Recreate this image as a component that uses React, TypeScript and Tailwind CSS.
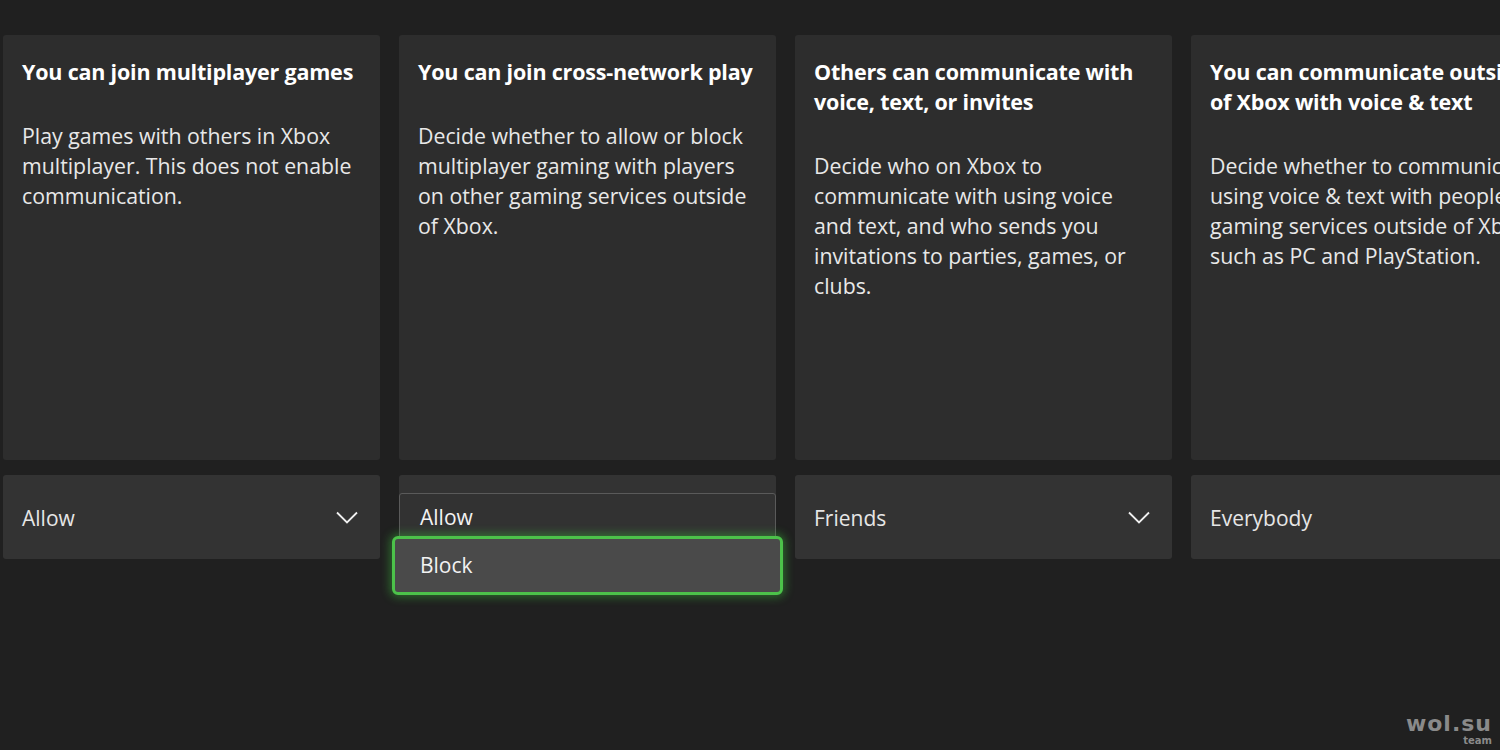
type Setting = {
  title: string;
  body: string;
  value: string;
};

const settings: Setting[] = [
  {
    title: 'You can join multiplayer games',
    body: 'Play games with others in Xbox multiplayer. This does not enable communication.',
    value: 'Allow',
  },
  {
    title: 'You can join cross-network play',
    body: 'Decide whether to allow or block multiplayer gaming with players on other gaming services outside of Xbox.',
    value: 'Allow',
  },
  {
    title: 'Others can communicate with voice, text, or invites',
    body: 'Decide who on Xbox to communicate with using voice and text, and who sends you invitations to parties, games, or clubs.',
    value: 'Friends',
  },
  {
    title: 'You can communicate outside of Xbox with voice & text',
    body: 'Decide whether to communicate using voice & text with people on gaming services outside of Xbox, such as PC and PlayStation.',
    value: 'Everybody',
  },
];

function Chevron() {
  return (
    <svg width="22" height="13" viewBox="0 0 22 13" fill="none" className="text-[#f0f0f0]">
      <polyline points="1,1.5 11,11.5 21,1.5" stroke="currentColor" strokeWidth="1.8" />
    </svg>
  );
}

function Select({ value }: { value: string }) {
  return (
    <div className="h-[84px] rounded-[3px] bg-[#333333] flex items-center justify-between pl-[19px] pr-[22px]">
      <span className="text-[21px] text-[#e6e6e6] mt-[4px]">{value}</span>
      <Chevron />
    </div>
  );
}

// Dropdown shown open, with "Block" focused
function OpenSelect() {
  return (
    <div className="relative h-[84px] rounded-[3px] bg-[#333333]">
      <div className="absolute left-0 right-0 top-[18px] h-[48px] rounded-[3px] border border-[#5a5a5a] bg-[#323232] flex items-center pl-[20px]">
        <span className="text-[21px] text-[#f2f2f2] mt-[2px]">Allow</span>
      </div>
      <div className="absolute left-[-7px] right-[-7px] top-[61px] h-[59px] rounded-[6px] border-[3px] border-[#4cc24a] bg-[#4a4a4a] shadow-[0_0_10px_2px_rgba(60,200,60,0.45)] flex items-center pl-[25px]">
        <span className="text-[21px] text-[#f2f2f2]">Block</span>
      </div>
    </div>
  );
}

export default function App() {
  return (
    <div
      className="relative w-[1500px] h-[750px] overflow-hidden bg-[#202020] text-white"
      style={{ fontFamily: '"Open Sans", "Noto Sans", sans-serif' }}
    >
      <div className="flex gap-[19px] pl-[3px] pt-[35px]">
        {settings.map((s, i) => (
          <div key={i} className="w-[377px] shrink-0 flex flex-col gap-[15px]">
            <div className="h-[425px] rounded-[3px] bg-[#2d2d2d] pl-[19px] pr-[22px] pt-[22px]">
              <h3 className="text-[21.5px] leading-[30px] font-bold text-white tracking-[-0.2px]">{s.title}</h3>
              <p className="mt-[34px] pr-[6px] text-[21.3px] leading-[30px] text-[#e8e8e8]">{s.body}</p>
            </div>
            {i === 1 ? <OpenSelect /> : <Select value={s.value} />}
          </div>
        ))}
      </div>

      <div
        className="absolute right-[8px] bottom-[4px] flex flex-col items-end leading-none text-[#8a8a8a]"
        style={{ fontFamily: '"DejaVu Sans", sans-serif' }}
      >
        <span className="text-[22px] font-bold tracking-[1px]">wol.su</span>
        <span className="text-[10px] font-bold mt-[1px]">team</span>
      </div>
    </div>
  );
}
